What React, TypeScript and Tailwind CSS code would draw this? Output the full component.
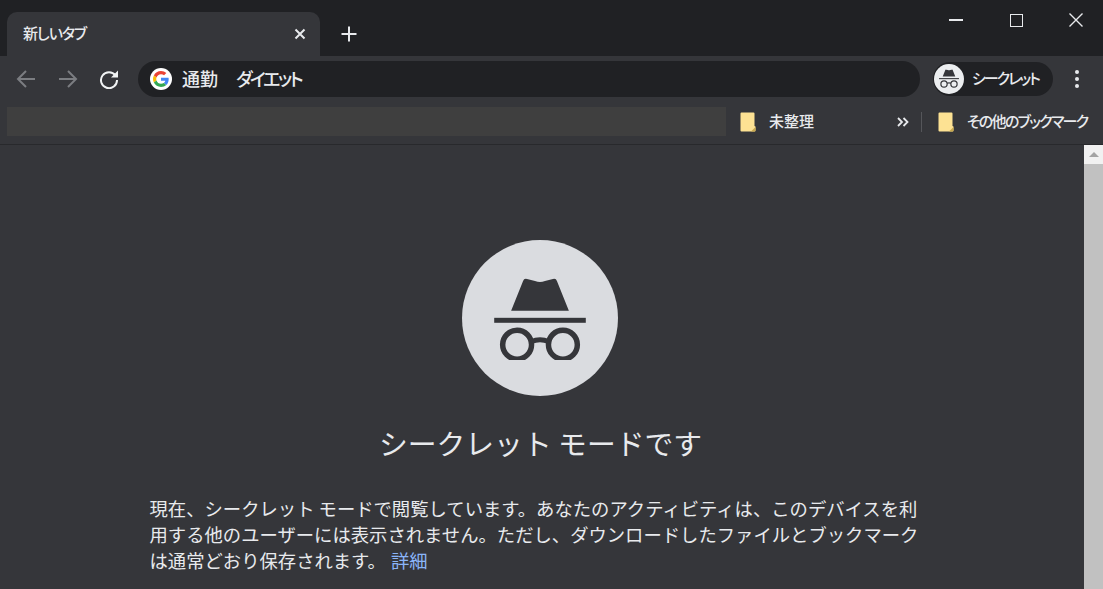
import React from "react";

const font = { fontFamily: '"Noto Sans CJK JP", "Noto Sans", sans-serif' };

function Folder() {
  return (
    <svg width="16" height="20" viewBox="0 0 16 20" className="shrink-0">
      <path d="M0.500 1.500 Q0.500 0.500 1.500 0.500 H13.500 Q14.500 0.500 14.500 1.500 V14 L15.500 14.500 V18.500 Q15.500 19.500 14.500 19.500 H1.500 Q0.500 19.500 0.500 18.500 Z" fill="#fde293" />
      <path d="M11 19.500 L15.500 15 V18.500 Q15.500 19.500 14.500 19.500 Z" fill="#c9a94f" />
    </svg>
  );
}

function Spy({ size, color }: { size: number; color: string }) {
  return (
    <svg width={size} height={size * 0.92} viewBox="0 0 92 85" fill="none">
      <path d="M17 35 L29 5 Q30 2 33 3 L41 5 Q46 7 51 5 L59 3 Q62 2 63 5 L75 35 Z" fill={color} />
      <rect x="0" y="42" width="92" height="5" fill={color} />
      <circle cx="23" cy="69" r="14.500" stroke={color} strokeWidth="5.500" />
      <circle cx="69" cy="69" r="14.500" stroke={color} strokeWidth="5.500" />
      <path d="M37 66 Q46 62 55 66" stroke={color} strokeWidth="5" />
    </svg>
  );
}

function GoogleG() {
  return (
    <svg width="16" height="16" viewBox="0 0 48 48">
      <path fill="#EA4335" d="M24 9.500c3.500 0 6.700 1.300 9.200 3.400l6.800-6.800C35.900 2.400 30.300 0 24 0 14.600 0 6.500 5.400 2.600 13.200l8 6.200C12.400 13.700 17.700 9.500 24 9.500z" />
      <path fill="#4285F4" d="M47 24.500c0-1.600-.1-3.100-.4-4.500H24v9h13c-.6 3-2.300 5.500-4.800 7.200l7.700 6C44.400 37.900 47 31.800 47 24.500z" />
      <path fill="#FBBC05" d="M10.500 28.600c-.5-1.400-.8-3-.8-4.600s.3-3.200.8-4.600l-8-6.200C.9 16.500 0 20.100 0 24s.9 7.500 2.600 10.800l7.900-6.200z" />
      <path fill="#34A853" d="M24 48c6.500 0 11.900-2.100 15.900-5.800l-7.700-6c-2.200 1.400-4.900 2.300-8.200 2.300-6.300 0-11.600-4.200-13.500-10l-7.900 6.200C6.500 42.600 14.600 48 24 48z" />
    </svg>
  );
}

export default function App() {
  return (
    <div className="w-[1103px] h-[589px] overflow-hidden flex flex-col bg-[#35363a] text-[#e8eaed]" style={font}>
      {/* Tab strip */}
      <div className="h-[56px] shrink-0 bg-[#202124] flex items-end pl-[7px]">
        <div className="w-[313px] h-[44px] bg-[#35363a] rounded-t-[10px] flex items-center pl-[16px] pr-[14px] justify-between pb-[1px]">
          <span className="text-[15px] tracking-[-1px] font-medium [font-feature-settings:'palt'] text-[#e8eaed]">新しいタブ</span>
          <svg width="12" height="12" viewBox="0 0 12 12" stroke="#e8eaed" strokeWidth="2">
            <path d="M1.500 1.500 L10.500 10.500 M10.500 1.500 L1.500 10.500" />
          </svg>
        </div>
        <div className="h-[44px] flex items-center pl-[21px]">
          <svg width="16" height="16" viewBox="0 0 16 16" stroke="#e8eaed" strokeWidth="2">
            <path d="M8 0.500 V15.500 M0.500 8 H15.500" />
          </svg>
        </div>
        <div className="ml-auto h-full flex items-start">
          <div className="w-[60px] h-[40px] flex items-center justify-center pl-[6px]">
            <div className="w-[14px] h-[1.500px] bg-[#e8eaed]" />
          </div>
          <div className="w-[60px] h-[40px] flex items-center justify-center pl-[6px]">
            <div className="w-[13px] h-[13px] border-[1.500px] border-[#e8eaed]" />
          </div>
          <div className="w-[60px] h-[40px] flex items-center justify-center pl-[6px]">
            <svg width="14" height="14" viewBox="0 0 14 14" stroke="#e8eaed" strokeWidth="1.400">
              <path d="M0.500 0.500 L13.500 13.500 M13.500 0.500 L0.500 13.500" />
            </svg>
          </div>
        </div>
      </div>

      {/* Toolbar */}
      <div className="h-[45px] shrink-0 flex items-center pl-[16px]">
        <svg width="20" height="20" viewBox="0 0 20 20" fill="none" stroke="#7b7d81" strokeWidth="2" className="shrink-0">
          <path d="M19 10 H2 M10 2 L2 10 L10 18" />
        </svg>
        <svg width="20" height="20" viewBox="0 0 20 20" fill="none" stroke="#7b7d81" strokeWidth="2" className="shrink-0 ml-[22px]">
          <path d="M1 10 H18 M10 2 L18 10 L10 18" />
        </svg>
        <svg width="20" height="20" viewBox="0 0 20 20" fill="none" className="shrink-0 ml-[21px]">
          <path d="M16.500 6.500 A8 8 0 1 0 18 11" stroke="#f1f3f4" strokeWidth="2" />
          <path d="M19 1.500 V8.500 H12 Z" fill="#f1f3f4" />
        </svg>
        <div className="ml-[19px] w-[782px] h-[36px] rounded-full bg-[#202124] flex items-center pl-[12px] shrink-0">
          <div className="w-[22px] h-[22px] rounded-full bg-white flex items-center justify-center">
            <GoogleG />
          </div>
          <span className="ml-[10px] text-[18px] font-medium text-[#e8eaed]">通勤</span>
          <span className="ml-[18px] text-[18px] font-medium tracking-[-2.500px] [font-feature-settings:'palt'] text-[#e8eaed] whitespace-nowrap">ダイエット</span>
        </div>
        <div className="ml-[13px] w-[120px] h-[34px] rounded-full bg-[#202124] flex items-center pl-[1px] shrink-0">
          <div className="w-[30px] h-[30px] rounded-full bg-[#eceef0] flex items-center justify-center shrink-0">
            <Spy size={20} color="#35363a" />
          </div>
          <span className="ml-[8px] text-[15px] font-medium tracking-[-2px] [font-feature-settings:'palt'] text-[#e8eaed] whitespace-nowrap">シークレット</span>
        </div>
        <div className="ml-[22px] flex flex-col gap-[3px] shrink-0">
          <div className="w-[4px] h-[4px] rounded-full bg-[#e8eaed]" />
          <div className="w-[4px] h-[4px] rounded-full bg-[#e8eaed]" />
          <div className="w-[4px] h-[4px] rounded-full bg-[#e8eaed]" />
        </div>
      </div>

      {/* Bookmarks */}
      <div className="h-[44px] shrink-0 flex items-center pl-[7px] border-b border-[#28292c] text-[15px] font-medium text-[#e8eaed]">
        <div className="w-[719px] h-[29px] bg-[#3f3f3f] mb-[3px] shrink-0" />
        <div className="ml-[14px] mb-[2px]"><Folder /></div>
        <span className="ml-[13px] w-[46px] whitespace-nowrap mb-[2px]">未整理</span>
        <svg width="12" height="10" viewBox="0 0 12 10" fill="none" stroke="#e8eaed" strokeWidth="1.800" className="ml-[82px] mb-[2px] shrink-0">
          <path d="M1 1 L5 5 L1 9 M6.500 1 L10.500 5 L6.500 9" />
        </svg>
        <div className="ml-[12px] w-[1px] h-[20px] bg-[#55565a] mb-[2px] shrink-0" />
        <div className="ml-[16px] mb-[2px]"><Folder /></div>
        <span className="ml-[13px] whitespace-nowrap tracking-[-1.700px] [font-feature-settings:'palt'] mb-[2px]">その他のブックマーク</span>
      </div>

      {/* Page */}
      <div className="flex-1 flex min-h-0">
        <div className="flex-1 flex flex-col items-center pt-[95px] min-w-0">
          <div className="w-[156px] h-[156px] rounded-full bg-[#dadce0] flex items-center justify-center mr-[5px] shrink-0">
            <Spy size={92} color="#35363a" />
          </div>
          <h1 className="mt-[26px] mr-[3px] text-[28.800px] leading-[42px] font-normal text-[#e8eaed] whitespace-pre">シークレット モードです</h1>
          <p className="mt-[31px] w-[782px] mr-[3px] text-[18.330px] leading-[26px] text-[#e8eaed]">
            現在、シークレット モードで閲覧しています。あなたのアクティビティは、このデバイスを利用する他のユーザーには表示されません。ただし、ダウンロードしたファイルとブックマークは通常どおり保存されます。
            <span className="ml-[5px] text-[#8ab4f8]">詳細</span>
          </p>
        </div>
        <div className="w-[19px] shrink-0 bg-[#c1c1c1] flex flex-col">
          <div className="h-[19px] bg-[#f1f1f1] flex items-center justify-center">
            <div className="w-0 h-0 border-l-[5px] border-r-[5px] border-b-[5px] border-l-transparent border-r-transparent border-b-[#a3a3a3]" />
          </div>
        </div>
      </div>
    </div>
  );
}
